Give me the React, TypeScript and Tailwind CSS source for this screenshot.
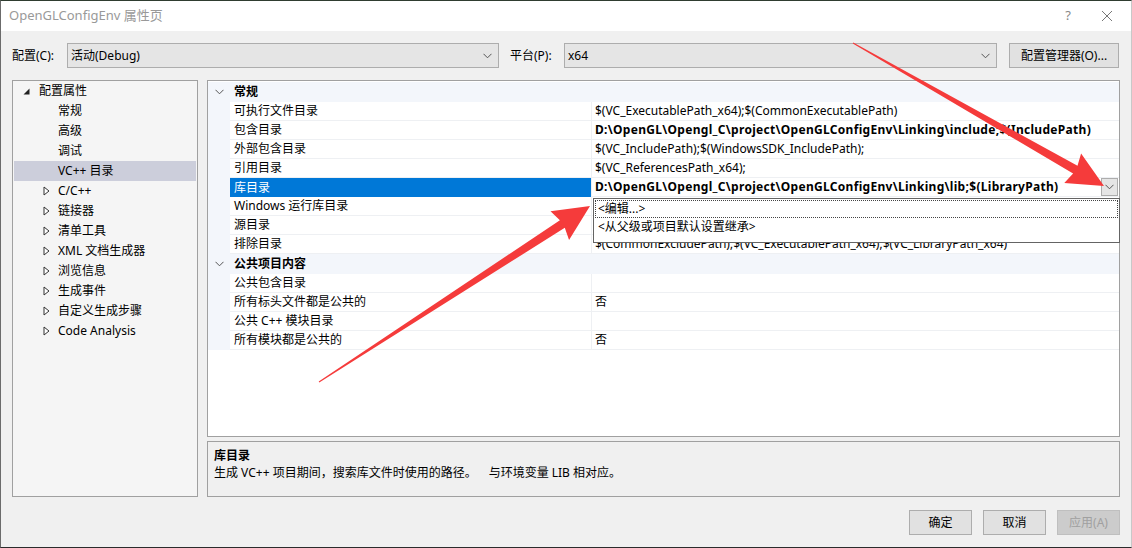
import React from 'react';

const FONT = { fontFamily: '"Noto Sans", "Noto Sans CJK SC", sans-serif' };

const Chevron: React.FC<{ className?: string }> = ({ className }) => (
    <svg className={className} width="9" height="6" viewBox="0 0 9 6" fill="none">
        <polyline points="0.5,0.8 4.5,4.8 8.5,0.8" stroke="#555" strokeWidth="1" />
    </svg>
);

const OpenTri = () => (
    <svg width="7" height="10" viewBox="0 0 7 10" fill="none">
        <polygon points="1,1 6,5 1,9" stroke="#333" strokeWidth="1" fill="#fff" />
    </svg>
);

const RootTri = () => (
    <svg width="7" height="7" viewBox="0 0 7 7">
        <polygon points="6.5,0.5 6.5,6.5 0.5,6.5" fill="#222" />
    </svg>
);

type TreeItem = { label: string; level: 0 | 1; expandable?: boolean; selected?: boolean };

const treeItems: TreeItem[] = [
    { label: '配置属性', level: 0 },
    { label: '常规', level: 1 },
    { label: '高级', level: 1 },
    { label: '调试', level: 1 },
    { label: 'VC++ 目录', level: 1, selected: true },
    { label: 'C/C++', level: 1, expandable: true },
    { label: '链接器', level: 1, expandable: true },
    { label: '清单工具', level: 1, expandable: true },
    { label: 'XML 文档生成器', level: 1, expandable: true },
    { label: '浏览信息', level: 1, expandable: true },
    { label: '生成事件', level: 1, expandable: true },
    { label: '自定义生成步骤', level: 1, expandable: true },
    { label: 'Code Analysis', level: 1, expandable: true },
];

type Row =
    | { kind: 'cat'; label: string }
    | { kind: 'prop'; name: string; value?: string; bold?: boolean; selected?: boolean };

const rows: Row[] = [
    { kind: 'cat', label: '常规' },
    { kind: 'prop', name: '可执行文件目录', value: '$(VC_ExecutablePath_x64);$(CommonExecutablePath)' },
    { kind: 'prop', name: '包含目录', value: 'D:\\OpenGL\\Opengl_C\\project\\OpenGLConfigEnv\\Linking\\include;$(IncludePath)', bold: true },
    { kind: 'prop', name: '外部包含目录', value: '$(VC_IncludePath);$(WindowsSDK_IncludePath);' },
    { kind: 'prop', name: '引用目录', value: '$(VC_ReferencesPath_x64);' },
    { kind: 'prop', name: '库目录', value: 'D:\\OpenGL\\Opengl_C\\project\\OpenGLConfigEnv\\Linking\\lib;$(LibraryPath)', bold: true, selected: true },
    { kind: 'prop', name: 'Windows 运行库目录' },
    { kind: 'prop', name: '源目录' },
    { kind: 'prop', name: '排除目录', value: '$(CommonExcludePath);$(VC_ExecutablePath_x64);$(VC_LibraryPath_x64)' },
    { kind: 'cat', label: '公共项目内容' },
    { kind: 'prop', name: '公共包含目录' },
    { kind: 'prop', name: '所有标头文件都是公共的', value: '否' },
    { kind: 'prop', name: '公共 C++ 模块目录' },
    { kind: 'prop', name: '所有模块都是公共的', value: '否' },
];

const ComboBox: React.FC<{ value: string; width: string }> = ({ value, width }) => (
    <div className={`${width} h-[25px] flex items-center justify-between border border-[#adadad] bg-[#e5e5e5] pl-[3px] pr-[6px]`}>
        <span>{value}</span>
        <Chevron />
    </div>
);

const Button: React.FC<{ label: string; disabled?: boolean; className?: string }> = ({ label, disabled, className }) => (
    <div
        className={`h-[25px] flex items-center justify-center border ${
            disabled ? 'border-[#bfbfbf] bg-[#cccccc] text-[#a0a0a0]' : 'border-[#adadad] bg-[#e1e1e1] text-black'
        } ${className ?? ''}`}
    >
        {label}
    </div>
);

export default function App() {
    return (
        <div className="relative w-[1132px] h-[548px] flex flex-col text-[12px] text-black bg-[#f0f0f0] border-t border-t-[#2f3d30] border-l border-l-[#6b6b6b] border-b border-b-[#2b2b2b] border-r border-r-[#c8c8c8] overflow-hidden" style={FONT}>
            {/* title bar */}
            <div className="h-[30px] shrink-0 bg-white flex items-center pl-[8px] pr-[14px] text-[#999]">
                <span className="text-[13px]">OpenGLConfigEnv 属性页</span>
                <span className="ml-auto mr-[30px] text-[13px] text-[#888]">?</span>
                <svg width="12" height="12" viewBox="0 0 12 12" className="mr-[4px]">
                    <path d="M1 1 L11 11 M11 1 L1 11" stroke="#777" strokeWidth="1" />
                </svg>
            </div>

            <div className="flex-1 flex flex-col pl-[11px] pr-[11px]">
                {/* config row */}
                <div className="mt-[12px] h-[25px] flex items-center">
                    <span className="w-[55px]">配置(C):</span>
                    <ComboBox value="活动(Debug)" width="w-[432px]" />
                    <span className="ml-[11px] w-[54px]">平台(P):</span>
                    <ComboBox value="x64" width="w-[433px]" />
                    <Button label="配置管理器(O)..." className="ml-[12px] w-[110px]" />
                </div>

                {/* main area */}
                <div className="mt-[12px] h-[417px] flex">
                    {/* tree */}
                    <div className="w-[186px] h-full border border-[#a0a0a0] bg-[#f5f5f5] px-px">
                        {treeItems.map(item => (
                            <div
                                key={item.label}
                                className={`h-[20px] flex items-center ${item.selected ? 'bg-[#cccedb]' : ''} ${
                                    item.level === 0 ? 'pl-[9px]' : item.expandable ? 'pl-[29px]' : 'pl-[44px]'
                                }`}
                            >
                                {item.level === 0 && (
                                    <span className="w-[7px] mr-[9px] flex items-center"><RootTri /></span>
                                )}
                                {item.level === 1 && item.expandable && (
                                    <span className="w-[7px] mr-[8px] flex items-center"><OpenTri /></span>
                                )}
                                <span>{item.label}</span>
                            </div>
                        ))}
                    </div>

                    <div className="ml-[9px] flex-1 flex flex-col">
                        {/* property grid */}
                        <div className="relative h-[357px] border border-[#a0a0a0] bg-white pt-px">
                            {rows.map((r, i) =>
                                r.kind === 'cat' ? (
                                    <div key={i} className="h-[20px] flex items-center bg-[#f3f6fb]">
                                        <span className="w-[22px] flex items-center justify-center pl-px"><Chevron /></span>
                                        <span className="pl-[4px] font-bold">{r.label}</span>
                                    </div>
                                ) : (
                                    <div key={i} className="h-[19px] flex">
                                        <div className="w-[22px] bg-[#f3f6fb]" />
                                        <div
                                            className={`w-[362px] flex items-center pl-[4px] border-r border-r-[#eef0f3] ${
                                                r.selected ? 'bg-[#0078d7] text-white' : 'border-b border-b-[#eef0f3]'
                                            }`}
                                        >
                                            {r.name}
                                        </div>
                                        <div className={`flex-1 flex items-center pl-[3px] border-b border-b-[#eef0f3] ${r.bold ? 'font-bold tracking-[0.3px]' : ''}`}>
                                            <span className="whitespace-nowrap">{r.value}</span>
                                            {r.selected && (
                                                <span className="ml-auto mr-px w-[17px] h-[18px] flex items-center justify-center border border-[#adadad] bg-[#e5e5e5]">
                                                    <Chevron />
                                                </span>
                                            )}
                                        </div>
                                    </div>
                                )
                            )}

                            {/* open dropdown list */}
                            <div className="absolute left-[385px] top-[117px] w-[527px] h-[45px] border border-[#646464] bg-white pt-px">
                                <div className="h-[18px] flex items-center pl-[2px] mx-px border border-dotted border-[#444]">&lt;编辑...&gt;</div>
                                <div className="h-[18px] flex items-center pl-[3px] mx-px">&lt;从父级或项目默认设置继承&gt;</div>
                            </div>
                        </div>

                        {/* description */}
                        <div className="mt-[4px] flex-1 border border-[#a0a0a0] bg-[#f0f0f0] px-[6px] pt-[5px] leading-[17px]">
                            <div className="font-bold">库目录</div>
                            <div>生成 VC++ 项目期间，搜索库文件时使用的路径。<span className="ml-[12px]">与环境变量 LIB 相对应。</span></div>
                        </div>
                    </div>
                </div>

                {/* bottom buttons */}
                <div className="mt-[13px] h-[25px] flex justify-end gap-[11px]">
                    <Button label="确定" className="w-[63px]" />
                    <Button label="取消" className="w-[63px]" />
                    <Button label="应用(A)" disabled className="w-[63px]" />
                </div>
            </div>

            {/* annotation arrows */}
            <svg className="absolute left-0 top-0 pointer-events-none" width="1132" height="548" viewBox="-1 -1 1132 548">
                <polygon
                    fill="#f53b3b"
                    points="851.25,40.57 1075.5,163.8 1079.1,151.4 1102,184 1062.3,181 1071.1,171.6 850.75,41.43"
                />
                <polygon
                    fill="#f53b3b"
                    points="316.73,379.58 557.9,218.2 548.5,209.3 588,204 567.06,237.9 562.8,225.8 317.27,380.42"
                />
            </svg>
        </div>
    );
}
